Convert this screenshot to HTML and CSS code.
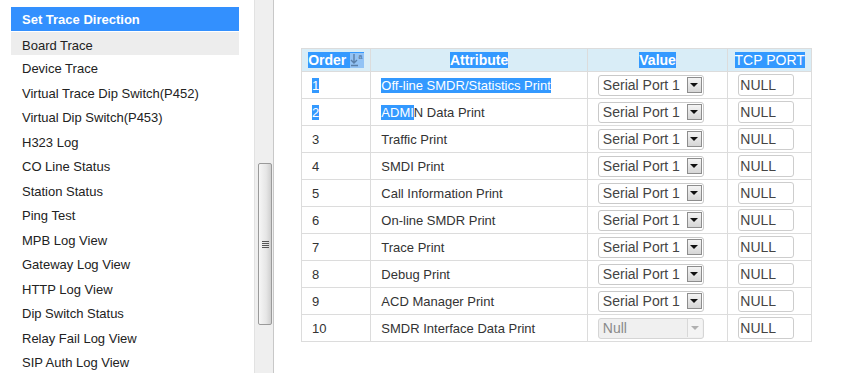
FILE: index.html
```html
<!DOCTYPE html>
<html lang="en">
<head>
  <meta charset="UTF-8" />
  <title>Set Trace Direction</title>
  <link rel="stylesheet" href="styles.css">
</head>
<body>

<div class="page">
  <aside class="menu-frame">
    <ul class="menu">
      <li class="menu-title">Set Trace Direction</li>
      <li class="current">Board Trace</li>
      <li>Device Trace</li>
      <li>Virtual Trace Dip Switch(P452)</li>
      <li>Virtual Dip Switch(P453)</li>
      <li>H323 Log</li>
      <li>CO Line Status</li>
      <li>Station Status</li>
      <li>Ping Test</li>
      <li>MPB Log View</li>
      <li>Gateway Log View</li>
      <li>HTTP Log View</li>
      <li>Dip Switch Status</li>
      <li>Relay Fail Log View</li>
      <li>SIP Auth Log View</li>
    </ul>
    <div class="scrollbar">
      <div class="thumb"><span class="grip"></span></div>
    </div>
  </aside>

  <main class="content">
    <table class="trace-table">
      <thead>
        <tr>
          <th class="col-order"><span class="sel">Order <span class="sort-icon"><svg width="14" height="14" viewBox="0 0 14 14"><path d="M4 1v9M1 7l3 3 3-3M1 12.5h7" stroke="#5a7fa8" stroke-width="1.4" fill="none"/><text x="8.5" y="6" font-size="7" fill="#5a7fa8" font-family="Liberation Sans, Arial, sans-serif">a</text></svg></span></span></th>
          <th class="col-attr"><span class="sel">Attribute</span></th>
          <th class="col-value"><span class="sel">Value</span></th>
          <th class="col-port"><span class="sel light">TCP PORT</span></th>
        </tr>
      </thead>
      <tbody>
        <tr>
          <td><span class="sel">1</span></td>
          <td><span class="sel">Off-line SMDR/Statistics Print </span></td>
          <td><div class="select"><span class="select-text">Serial Port 1</span><span class="select-arrow"></span></div></td>
          <td><input class="port" type="text" value="NULL"></td>
        </tr>
        <tr>
          <td><span class="sel">2</span></td>
          <td><span class="sel">ADMI</span>N Data Print</td>
          <td><div class="select"><span class="select-text">Serial Port 1</span><span class="select-arrow"></span></div></td>
          <td><input class="port" type="text" value="NULL"></td>
        </tr>
        <tr>
          <td>3</td>
          <td>Traffic Print</td>
          <td><div class="select"><span class="select-text">Serial Port 1</span><span class="select-arrow"></span></div></td>
          <td><input class="port" type="text" value="NULL"></td>
        </tr>
        <tr>
          <td>4</td>
          <td>SMDI Print</td>
          <td><div class="select"><span class="select-text">Serial Port 1</span><span class="select-arrow"></span></div></td>
          <td><input class="port" type="text" value="NULL"></td>
        </tr>
        <tr>
          <td>5</td>
          <td>Call Information Print</td>
          <td><div class="select"><span class="select-text">Serial Port 1</span><span class="select-arrow"></span></div></td>
          <td><input class="port" type="text" value="NULL"></td>
        </tr>
        <tr>
          <td>6</td>
          <td>On-line SMDR Print</td>
          <td><div class="select"><span class="select-text">Serial Port 1</span><span class="select-arrow"></span></div></td>
          <td><input class="port" type="text" value="NULL"></td>
        </tr>
        <tr>
          <td>7</td>
          <td>Trace Print</td>
          <td><div class="select"><span class="select-text">Serial Port 1</span><span class="select-arrow"></span></div></td>
          <td><input class="port" type="text" value="NULL"></td>
        </tr>
        <tr>
          <td>8</td>
          <td>Debug Print</td>
          <td><div class="select"><span class="select-text">Serial Port 1</span><span class="select-arrow"></span></div></td>
          <td><input class="port" type="text" value="NULL"></td>
        </tr>
        <tr>
          <td>9</td>
          <td>ACD Manager Print</td>
          <td><div class="select"><span class="select-text">Serial Port 1</span><span class="select-arrow"></span></div></td>
          <td><input class="port" type="text" value="NULL"></td>
        </tr>
        <tr>
          <td>10</td>
          <td>SMDR Interface Data Print</td>
          <td><div class="select disabled"><span class="select-text">Null</span><span class="select-arrow"></span></div></td>
          <td><input class="port" type="text" value="NULL"></td>
        </tr>
      </tbody>
    </table>
  </main>
</div>

</body>
</html>
```

FILE: styles.css
```css
body {
  margin: 0;
  padding: 0;
  font-family: 'Liberation Sans', Arial, sans-serif;
  font-size: 13px;
  color: #222;
  background: #fff;
  overflow: hidden;
}
.page {
  display: flex;
  height: 373px;
}
.menu-frame {
  display: flex;
  width: 276px;
  flex-shrink: 0;
}
.menu {
  list-style: none;
  margin: 7px 0 0 11px;
  padding: 0;
  width: 228px;
}
.menu li {
  height: 22.5px;
  line-height: 24.5px;
  padding: 2px 0 0 11px;
  white-space: nowrap;
}
.menu li.menu-title {
  height: 23px;
  line-height: 24px;
  padding-top: 1px;
  background: #3390fe;
  color: #fff;
  font-weight: bold;
}
.menu li.current {
  margin-top: 1px;
  height: 21px;
  line-height: 24px;
  background: #ededed;
}
.scrollbar {
  margin-left: 15px;
  width: 20px;
  height: 100%;
  background: #efefef;
  border-left: 1px solid #e2e2e2;
  border-right: 1px solid #c8c8c8;
  display: flex;
  flex-direction: column;
  padding-top: 163px;
  box-sizing: border-box;
}
.thumb {
  margin-left: 3px;
  width: 14px;
  height: 162px;
  box-sizing: border-box;
  border: 1px solid #9a9a9a;
  border-radius: 2px;
  background: linear-gradient(to right, #f6f6f6, #e6e6e6 60%, #cfcfcf);
  display: flex;
  align-items: center;
  justify-content: center;
}
.grip {
  width: 7px;
  height: 7px;
  background: repeating-linear-gradient(to bottom, #555 0, #555 1px, transparent 1px, transparent 2px);
}
.content {
  flex: 1;
  padding: 48px 0 0 25px;
}
.trace-table {
  border-collapse: collapse;
  width: 511px;
  border: 1px solid #dcdcdc;
}
.trace-table th,
.trace-table td {
  border: 1px solid #dcdcdc;
  height: 26px;
  padding: 0;
}
.trace-table th {
  height: 22px;
  background: #d9edf7;
  font-weight: bold;
  font-size: 14px;
  text-align: center;
}
.trace-table td {
  padding-left: 10px;
  color: #333;
}
.col-order { width: 69px; }
.col-attr { width: 218px; }
.col-value { width: 140px; }
.col-port { width: 83px; }
.sel {
  background: #3399ff;
  color: #fff;
}
.sel.light {
  font-weight: normal;
}
.sort-icon {
  display: inline-block;
  vertical-align: -2px;
  background: #93c3f5;
  height: 15px;
}
.select {
  display: flex;
  align-items: center;
  width: 106px;
  height: 21px;
  box-sizing: border-box;
  border: 1px solid #c9c9c9;
  border-radius: 3px;
  background: #fff;
  padding: 0 1px 0 4px;
  font-size: 14px;
  color: #444;
}
.select-text {
  flex: 1;
}
.select-arrow {
  width: 15px;
  height: 16px;
  box-sizing: border-box;
  border: 1px solid #8d8d8d;
  background: linear-gradient(to bottom, #f4f4f4, #d6d6d6);
  display: flex;
  align-items: center;
  justify-content: center;
}
.select-arrow::after {
  content: "";
  border-left: 4px solid transparent;
  border-right: 4px solid transparent;
  border-top: 4px solid #111;
}
.select.disabled {
  background: #f0f0f0;
  color: #8a8a8a;
  border-color: #d5d5d5;
}
.select.disabled .select-arrow {
  border: none;
  border-left: 1px solid #d8d8d8;
  background: #f4f4f4;
  height: 18px;
}
.select.disabled .select-arrow::after {
  border-top-color: #b0b0b0;
}
.port {
  width: 56px;
  height: 22px;
  box-sizing: border-box;
  border: 1px solid #cdcdcd;
  border-radius: 3px;
  padding: 0 1px;
  font-family: 'Liberation Sans', Arial, sans-serif;
  font-size: 14px;
  color: #444;
}
```
